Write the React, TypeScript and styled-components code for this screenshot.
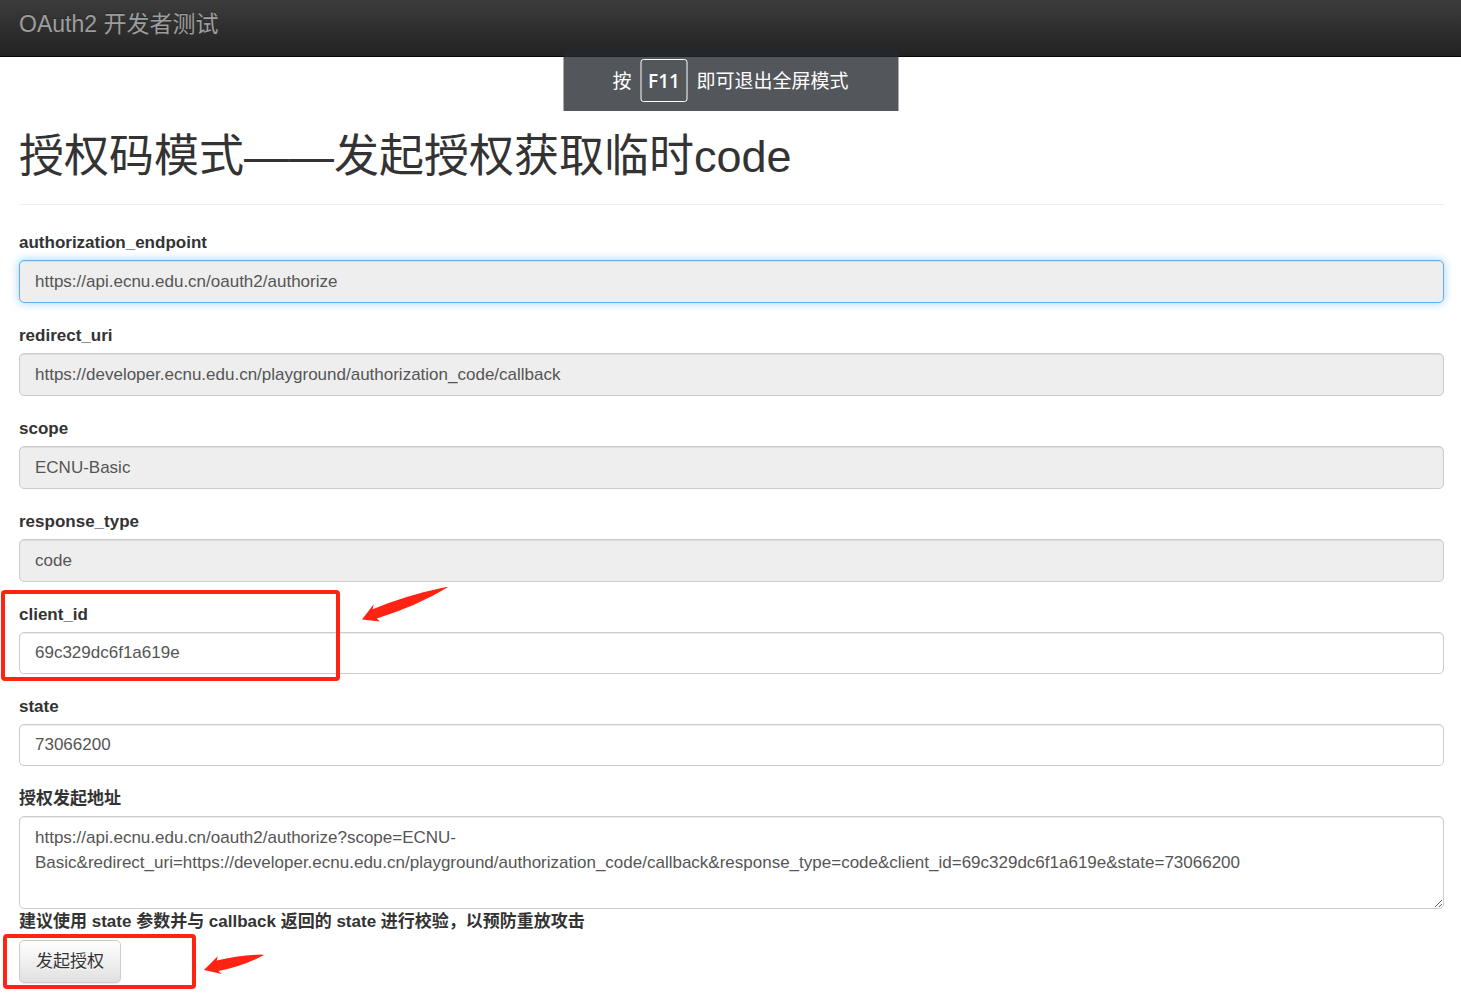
import React from "react";
import styled, { createGlobalStyle, css } from "styled-components";

const GlobalStyle = createGlobalStyle`
  *, *::before, *::after { box-sizing: border-box; }
  body {
    margin: 0;
    background: #fff;
    color: #333;
    font-family: "Liberation Sans", "Noto Sans CJK SC", sans-serif;
    font-size: 17px;
    line-height: 25px;
  }
  input, textarea, button { font: inherit; }
`;

const Page = styled.div`
  position: relative;
`;

const Navbar = styled.header`
  height: 57px;
  padding: 12px 19px;
  background: linear-gradient(to bottom, #3c3c3c, #222);
  border-bottom: 1px solid #080808;
`;

const Brand = styled.a`
  display: inline-block;
  color: #9d9d9d;
  font-size: 23px;
  line-height: 25px;
  text-decoration: none;
  text-shadow: 0 -1px 0 rgba(0, 0, 0, 0.25);
`;

const Toast = styled.div`
  position: absolute;
  top: 49px;
  left: 50%;
  transform: translateX(-50%);
  width: 335px;
  height: 62px;
  display: flex;
  align-items: center;
  justify-content: center;
  gap: 9px;
  background: rgba(37, 41, 47, 0.79);
  color: #fff;
  font-size: 19px;
  white-space: nowrap;
`;

const ToastText = styled.span`
  padding-top: 3px;
`;

const Key = styled.kbd`
  width: 47px;
  height: 43px;
  border: 1px solid #fff;
  border-radius: 3px;
  font-family: "Open Sans", sans-serif;
  font-weight: 600;
  font-size: 19px;
  line-height: 43px;
  text-align: center;
`;

const Main = styled.main`
  padding: 0 17px 14px 19px;
`;

const PageHeader = styled.div`
  padding: 75px 0 22px;
  border-bottom: 1px solid #eee;
  margin-bottom: 25px;
`;

const Title = styled.h1`
  margin: 0;
  font-size: 45px;
  font-weight: 400;
  line-height: 50px;
`;

const Group = styled.div`
  position: relative;
  margin-bottom: 20px;
`;

const Label = styled.label`
  display: block;
  margin-bottom: 5px;
  font-weight: 700;
`;

const control = css`
  display: block;
  width: 100%;
  padding: 8px 15px;
  border: 1px solid #ccc;
  border-radius: 5px;
  background: #fff;
  color: #555;
  box-shadow: inset 0 1px 1px rgba(0, 0, 0, 0.075);
  outline: none;
`;

const Input = styled.input<{ $active?: boolean }>`
  ${control}
  height: 42px;
  &:read-only {
    height: 43px;
    background: #eee;
  }
  ${(p) =>
    p.$active &&
    css`
      border-color: #66afe9;
      box-shadow: inset 0 1px 1px rgba(0, 0, 0, 0.075), 0 0 10px rgba(102, 175, 233, 0.6);
    `}
`;

const TextArea = styled.textarea`
  ${control}
  height: 93px;
  resize: vertical;
`;

const Hint = styled.strong`
  display: block;
`;

const Actions = styled.div`
  position: relative;
  margin-top: 6px;
`;

const SubmitButton = styled.button`
  display: block;
  height: 43px;
  padding: 0 16px;
  border: 1px solid #ccc;
  border-radius: 5px;
  background: linear-gradient(to bottom, #fff, #e0e0e0);
  color: #333;
  text-shadow: 0 1px 0 #fff;
  box-shadow: inset 0 1px 0 rgba(255, 255, 255, 0.15), 0 1px 1px rgba(0, 0, 0, 0.075);
`;

const Frame = styled.span<{ $x: number; $y: number; $w: number; $h: number }>`
  position: absolute;
  left: ${(p) => p.$x}px;
  top: ${(p) => p.$y}px;
  width: ${(p) => p.$w}px;
  height: ${(p) => p.$h}px;
  border: 4px solid #ff2313;
  border-radius: 4px;
  pointer-events: none;
`;

const Arrow = styled.svg<{ $x: number; $y: number }>`
  position: absolute;
  left: ${(p) => p.$x}px;
  top: ${(p) => p.$y}px;
  fill: #ff2313;
  pointer-events: none;
`;

type FieldProps = {
  name: string;
  value: string;
  readOnly?: boolean;
  active?: boolean;
  children?: React.ReactNode;
};

function Field({ name, value, readOnly, active, children }: FieldProps) {
  return (
    <Group>
      <Label htmlFor={name}>{name}</Label>
      <Input id={name} name={name} type="text" defaultValue={value} readOnly={readOnly} $active={active} />
      {children}
    </Group>
  );
}

export default function App() {
  return (
    <Page>
      <GlobalStyle />
      <Navbar>
        <Brand href="#">OAuth2 开发者测试</Brand>
      </Navbar>
      <Main>
        <PageHeader>
          <Title>授权码模式——发起授权获取临时code</Title>
        </PageHeader>
        <form onSubmit={(e) => e.preventDefault()}>
          <Field name="authorization_endpoint" value="https://api.ecnu.edu.cn/oauth2/authorize" readOnly active />
          <Field name="redirect_uri" value="https://developer.ecnu.edu.cn/playground/authorization_code/callback" readOnly />
          <Field name="scope" value="ECNU-Basic" readOnly />
          <Field name="response_type" value="code" readOnly />
          <Field name="client_id" value="69c329dc6f1a619e">
            <Frame $x={-18} $y={-12} $w={339} $h={91} />
            <Arrow $x={342} $y={-16} width="88" height="38" viewBox="0 0 88 38" aria-hidden="true">
              <path d="M1 33.5 L12.7 18.3 L11.6 23.2 Q46 9 84 1.2 Q88 0.4 86 1.8 Q56 20 15.8 32.4 L18.8 35.4 Z" />
            </Arrow>
          </Field>
          <Field name="state" value="73066200" />
          <Label htmlFor="authorize_url">授权发起地址</Label>
          <TextArea
            id="authorize_url"
            defaultValue="https://api.ecnu.edu.cn/oauth2/authorize?scope=ECNU-Basic&redirect_uri=https://developer.ecnu.edu.cn/playground/authorization_code/callback&response_type=code&client_id=69c329dc6f1a619e&state=73066200"
          />
          <Hint>建议使用 state 参数并与 callback 返回的 state 进行校验，以预防重放攻击</Hint>
          <Actions>
            <SubmitButton type="submit">发起授权</SubmitButton>
            <Frame $x={-16} $y={-6} $w={193} $h={55} />
            <Arrow $x={184} $y={13} width="64" height="24" viewBox="0 0 64 24" aria-hidden="true">
              <path d="M1 17 L14.7 3.3 L13.7 7.6 Q35 2.6 58 1.6 Q63 1.6 59 3 Q40 13 15.5 18 L18.7 21 Z" />
            </Arrow>
          </Actions>
        </form>
      </Main>
      <Toast role="status">
        <ToastText>按</ToastText>
        <Key>F11</Key>
        <ToastText>即可退出全屏模式</ToastText>
      </Toast>
    </Page>
  );
}
